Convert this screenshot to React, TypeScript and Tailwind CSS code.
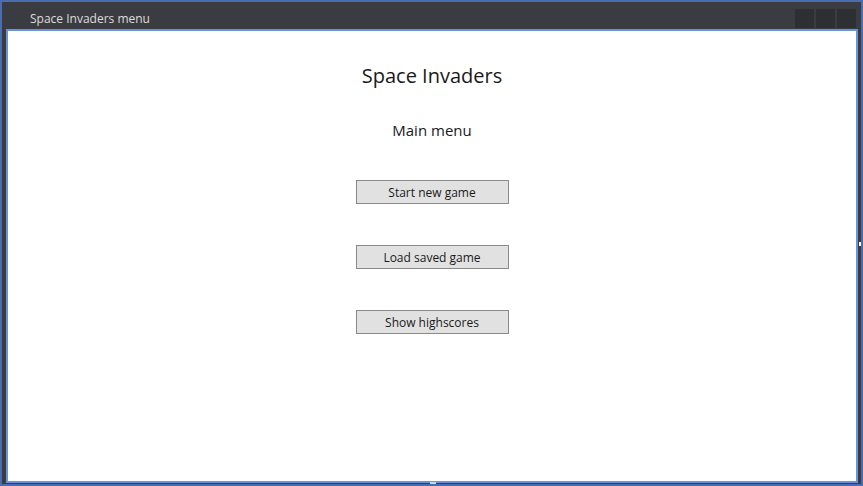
import React from 'react'

const menuItems = ['Start new game', 'Load saved game', 'Show highscores']

export default function App() {
  return (
    <div
      className="relative w-[863px] h-[486px] flex flex-col bg-[#3b3c41] border-2 border-[#4a6db0] overflow-hidden"
      style={{ fontFamily: '"Open Sans", "Noto Sans", sans-serif' }}
    >
      {/* Title bar */}
      <div className="h-[27px] flex items-center justify-between">
        <span className="pl-[28px] pt-[6px] text-[12px] text-[#dcdcdc]">Space Invaders menu</span>
        <div className="flex gap-[2px] pr-[5px] pt-[5px]">
          <div className="w-[19px] h-[19px] bg-[#2e2f33]" />
          <div className="w-[19px] h-[19px] bg-[#2e2f33]" />
          <div className="w-[19px] h-[19px] bg-[#2e2f33]" />
        </div>
      </div>

      {/* Client area */}
      <div className="flex-1 ml-[4px] mr-[3px] mb-[1px] bg-white border-2 border-[#6a93dc] flex flex-col items-center">
        <h1 className="mt-[31px] text-[20px] leading-[28px] text-[#1a1a1a]">Space Invaders</h1>
        <h2 className="mt-[30px] text-[15px] leading-[20px] text-[#1a1a1a]">Main menu</h2>
        <div className="mt-[40px] flex flex-col gap-[41px]">
          {menuItems.map((item) => (
            <button
              key={item}
              className="w-[153px] h-[24px] pt-[2px] bg-[#e1e1e1] border border-[#8a8a8a] text-[12px] text-[#1a1a1a] leading-none"
            >
              {item}
            </button>
          ))}
        </div>
      </div>

      {/* resize grips */}
      <div className="absolute right-0 top-[240px] w-[2px] h-[4px] bg-white" />
      <div className="absolute bottom-0 left-[428px] w-[6px] h-[2px] bg-[#c8d6f0]" />
    </div>
  )
}
